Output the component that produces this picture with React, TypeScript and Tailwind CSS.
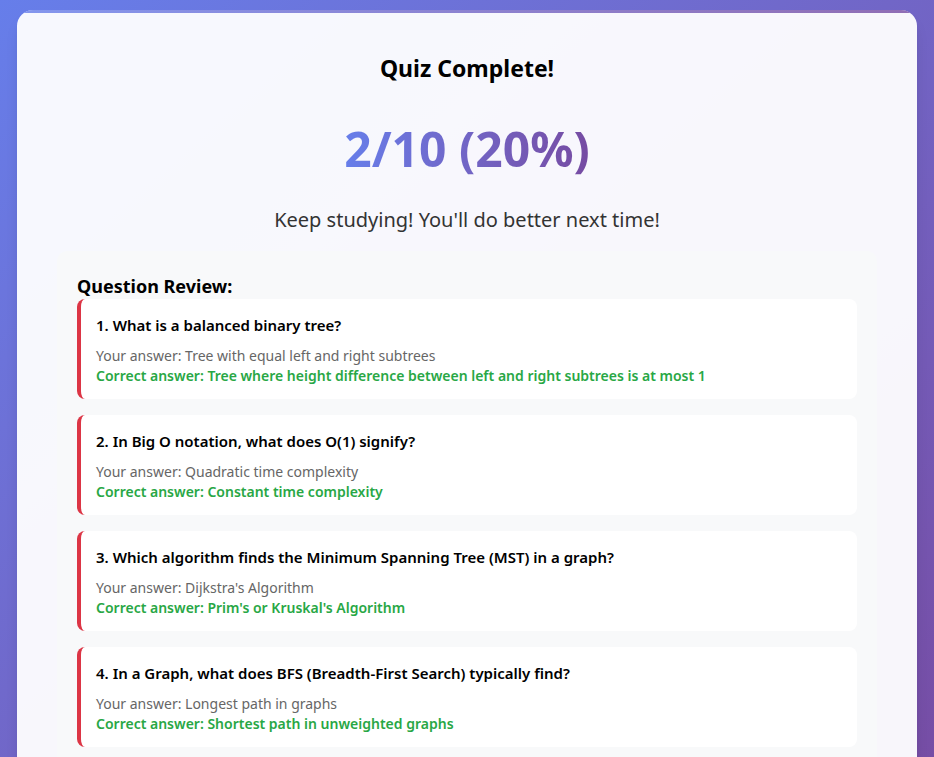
const results = [
  {
    q: 'What is a balanced binary tree?',
    yours: 'Tree with equal left and right subtrees',
    correct: 'Tree where height difference between left and right subtrees is at most 1',
  },
  {
    q: 'In Big O notation, what does O(1) signify?',
    yours: 'Quadratic time complexity',
    correct: 'Constant time complexity',
  },
  {
    q: 'Which algorithm finds the Minimum Spanning Tree (MST) in a graph?',
    yours: "Dijkstra's Algorithm",
    correct: "Prim's or Kruskal's Algorithm",
  },
  {
    q: 'In a Graph, what does BFS (Breadth-First Search) typically find?',
    yours: 'Longest path in graphs',
    correct: 'Shortest path in unweighted graphs',
  },
];

export default function App() {
  return (
    <div className="min-h-screen bg-gradient-to-br from-[#667eea] to-[#764ba2] px-[17px] pt-[10px] pb-5 font-['Noto_Sans',sans-serif]">
      <div className="relative overflow-hidden rounded-2xl bg-white/95 px-10 pt-[42px] pb-10 shadow-lg">
        <div className="absolute top-0 left-0 right-0 h-[3px] bg-gradient-to-r from-[#667eea] to-[#764ba2] opacity-80" />
        <h2 className="text-center text-[23px] leading-8 font-bold text-black">Quiz Complete!</h2>
        <div className="mt-[36px] text-center text-5xl font-bold leading-[1.2]">
          <span className="bg-gradient-to-r from-[#667eea] to-[#764ba2] bg-clip-text text-transparent">2/10 (20%)</span>
        </div>
        <p className="mt-[28px] text-center text-xl text-[#333]">Keep studying! You'll do better next time!</p>

        <div className="mt-[17px] rounded-[10px] bg-[#f8f9fa] px-5 pt-[23px] pb-5">
          <h3 className="text-lg leading-[25px] font-bold text-black">Question Review:</h3>
          <div className="flex flex-col gap-4">
            {results.map((r, i) => (
              <div key={i} className="rounded-lg border-l-4 border-[#dc3545] bg-white px-[15px] pt-[15px] pb-[13px]">
                <p className="mb-[10px] text-[15px] leading-[22px] font-semibold text-black">
                  {i + 1}. {r.q}
                </p>
                <p className="text-[14px] leading-5 text-[#666]">Your answer: {r.yours}</p>
                <p className="text-[14px] leading-5 font-semibold text-[#28a745]">Correct answer: {r.correct}</p>
              </div>
            ))}
          </div>
        </div>
      </div>
    </div>
  );
}
